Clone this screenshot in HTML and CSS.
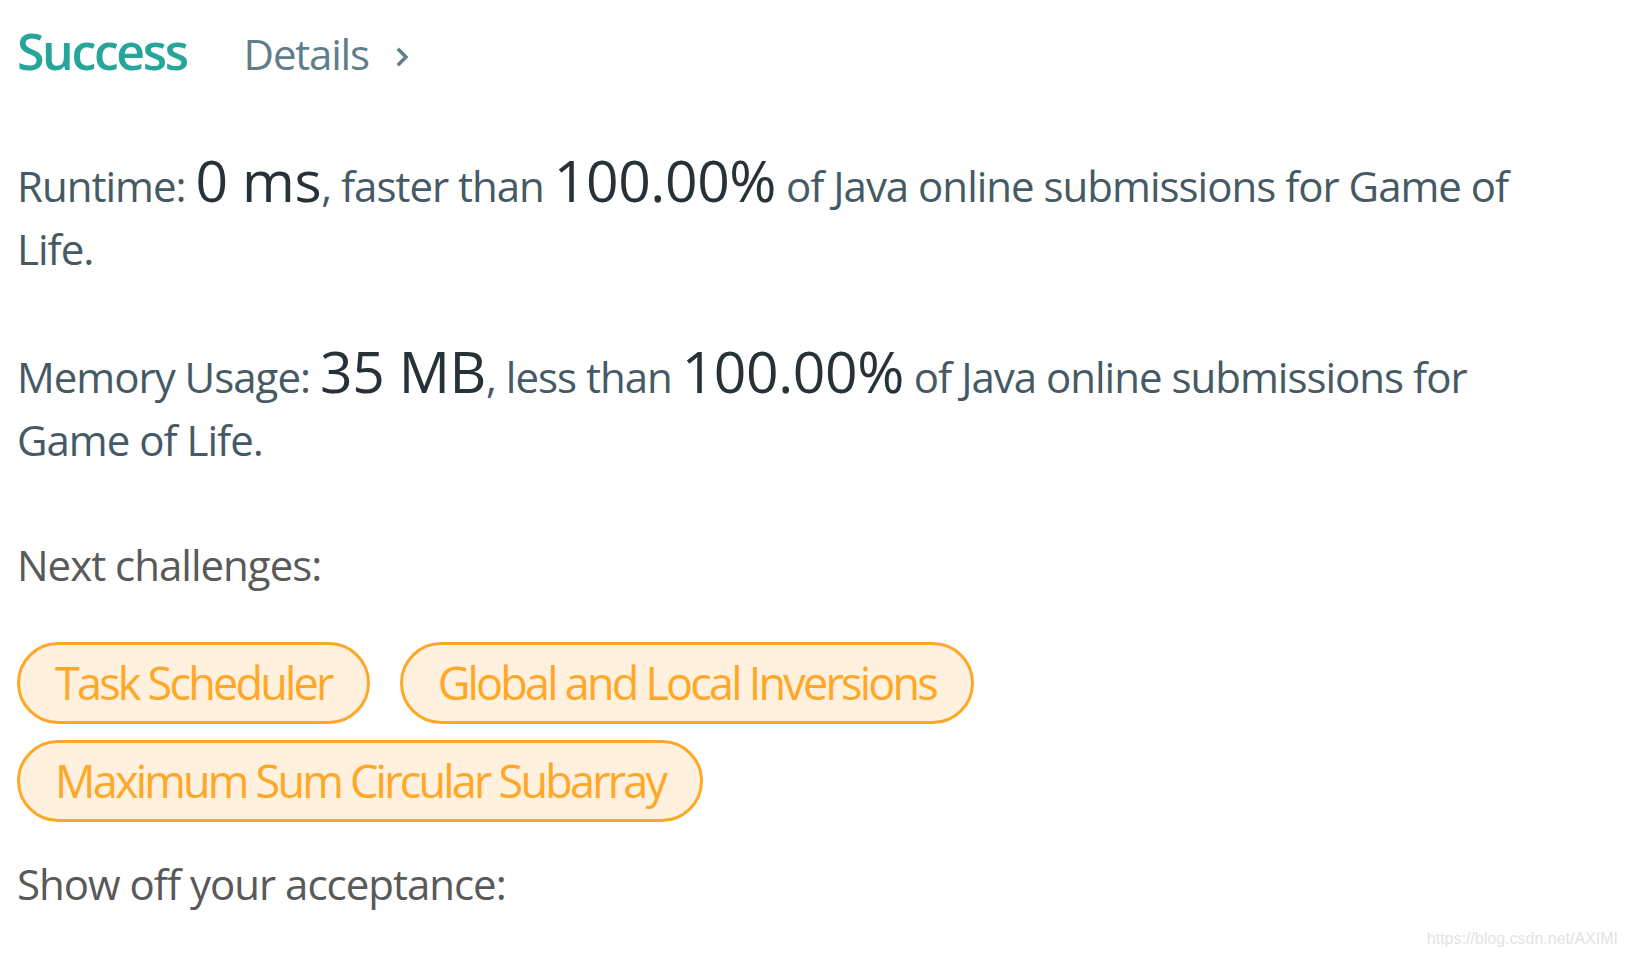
FILE: index.html
```html
<!DOCTYPE html>
<html lang="en">
<head>
<meta charset="utf-8">
<title>Submission result</title>
<link rel="stylesheet" href="styles.css">
</head>
<body>
<div class="page">
  <div class="header">
    <span class="status">Success</span>
    <a class="details">Details
      <svg class="chev" width="14" height="22" viewBox="0 0 14 22" aria-hidden="true">
        <polyline points="3,4 10,11 3,18" fill="none" stroke="#607d8b" stroke-width="3.4" stroke-linecap="square" stroke-linejoin="miter"/>
      </svg>
    </a>
  </div>
  <p class="stat stat-runtime">Runtime: <span class="big">0 ms</span>, faster than <span class="big">100.00%</span> of Java online submissions for Game of Life.</p>
  <p class="stat stat-memory">Memory Usage: <span class="big">35 MB</span>, less than <span class="big">100.00%</span> of Java online submissions for Game of Life.</p>
  <p class="label label-next">Next challenges:</p>
  <div class="pills">
    <a class="pill">Task Scheduler</a>
    <a class="pill">Global and Local Inversions</a>
    <a class="pill">Maximum Sum Circular Subarray</a>
  </div>
  <p class="label label-show">Show off your acceptance:</p>
</div>
<div class="watermark">https://blog.csdn.net/AXIMI</div>
</body>
</html>
```

FILE: styles.css
```css
html, body {
  margin: 0;
  padding: 0;
  background: #ffffff;
}

body {
  font-family: "Open Sans", "Noto Sans", sans-serif;
  width: 1627px;
  height: 955px;
  overflow: hidden;
  position: relative;
}

.page {
  width: 1560px;
  padding-left: 17px;
}

.header {
  display: flex;
  align-items: baseline;
  padding-top: 14px;
}

.status {
  font-size: 50px;
  font-weight: 600;
  line-height: 75px;
  color: #26a69a;
  letter-spacing: -2.4px;
}

.details {
  display: inline-flex;
  align-items: baseline;
  margin-left: 57px;
  font-size: 42px;
  line-height: 63px;
  color: #607d8b;
  letter-spacing: -1.2px;
}

.chev {
  margin-left: 27px;
  align-self: center;
  margin-top: 6px;
}

.stat {
  font-size: 42px;
  line-height: 63px;
  color: #455a64;
  letter-spacing: -1px;
  margin: 0;
}

.stat-runtime {
  margin-top: 65px;
}

.stat-memory {
  margin-top: 65px;
}

.big {
  font-size: 57px;
  line-height: 51px;
  color: #263238;
  letter-spacing: -0.4px;
}

.label {
  font-size: 42px;
  line-height: 63px;
  color: #595959;
  letter-spacing: -1px;
  margin: 0;
}

.label-next {
  margin-top: 62px;
}

.label-show {
  margin-top: 30px;
}

.pills {
  display: flex;
  flex-wrap: wrap;
  gap: 16px 30px;
  margin-top: 46px;
}

.pill {
  display: inline-block;
  padding: 4px 35px;
  line-height: 68px;
  font-size: 45px;
  color: #ffa726;
  background: #fff1de;
  border: 3px solid #ffa726;
  border-radius: 41px;
  letter-spacing: -2.8px;
  white-space: nowrap;
}

.watermark {
  position: absolute;
  right: 9px;
  bottom: 7px;
  font-family: "Liberation Sans", Arial, sans-serif;
  font-size: 16px;
  color: #e3e3e3;
}
```
